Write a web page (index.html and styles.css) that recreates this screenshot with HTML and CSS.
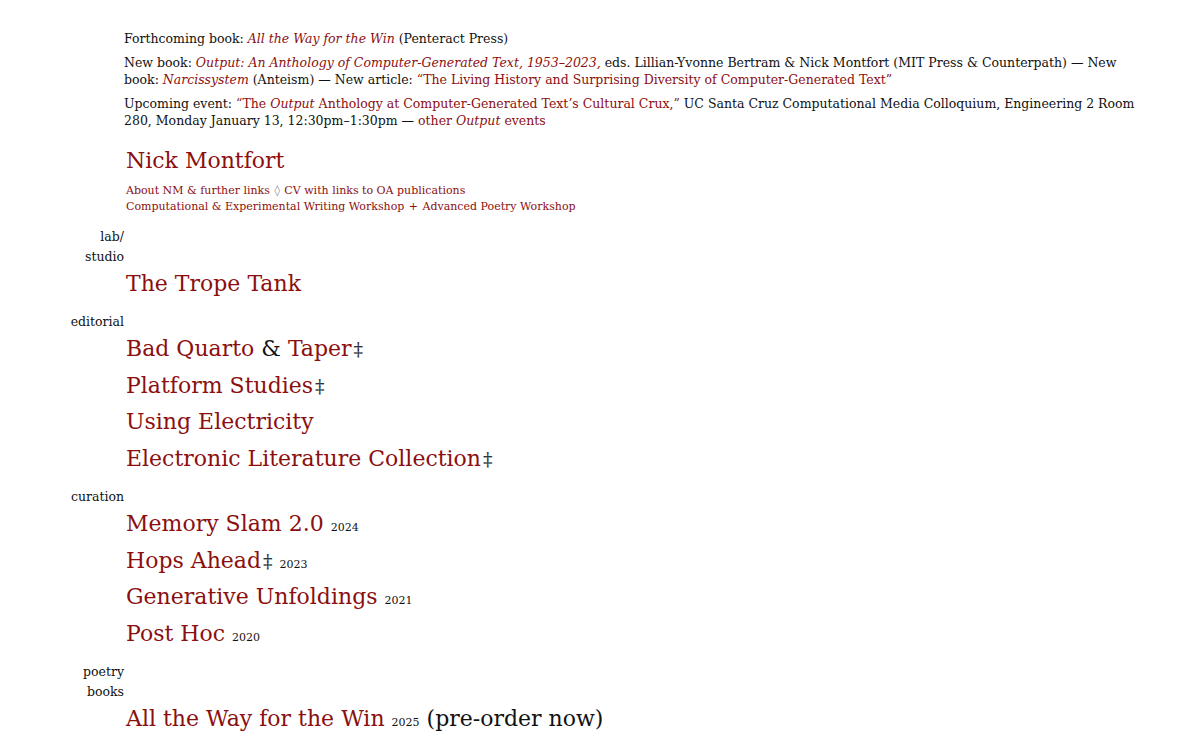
FILE: index.html
```html
<!DOCTYPE html>
<html lang="en">
<head>
    <meta charset="UTF-8">
    <meta name="viewport" content="width=device-width, initial-scale=1.0">
    <title>Nick Montfort</title>
    <link rel="stylesheet" href="styles.css">
</head>
<body>
    <div class="news">
        <p>Forthcoming book: <a href="#"><i>All the Way for the Win</i></a> (Penteract Press)</p>
        <p>New book: <a href="#"><i>Output: An Anthology of Computer-Generated Text, 1953&ndash;2023,</i></a> eds. Lillian-Yvonne Bertram &amp; Nick Montfort (MIT Press &amp; Counterpath) &mdash; New book: <a href="#"><i>Narcissystem</i></a> (Anteism) &mdash; New article: <a href="#">&ldquo;The Living History and Surprising Diversity of Computer-Generated Text&rdquo;</a></p>
        <p>Upcoming event: <a href="#">&ldquo;The <i>Output</i> Anthology at Computer-Generated Text&rsquo;s Cultural Crux,&rdquo;</a> UC Santa Cruz Computational Media Colloquium, Engineering 2 Room 280, Monday January 13, 12:30pm&ndash;1:30pm &mdash; <a href="#">other <i>Output</i> events</a></p>
    </div>

    <div class="intro">
        <h1><a href="#">Nick Montfort</a></h1>
        <div class="links">
            <a href="#">About NM &amp; further links</a> <span class="sep">&#9674;</span> <a href="#">CV with links to OA publications</a><br>
            <a href="#">Computational &amp; Experimental Writing Workshop</a> <span class="plus">+</span> <a href="#">Advanced Poetry Workshop</a>
        </div>
    </div>

    <section class="group">
        <div class="label">lab/<br>studio</div>
        <div class="entry"><a href="#">The Trope Tank</a></div>
    </section>

    <section class="group">
        <div class="label">editorial</div>
        <div class="entry"><a href="#">Bad Quarto</a> &amp; <a href="#">Taper</a><span class="dag">&Dagger;</span></div>
        <div class="entry"><a href="#">Platform Studies</a><span class="dag">&Dagger;</span></div>
        <div class="entry"><a href="#">Using Electricity</a></div>
        <div class="entry"><a href="#">Electronic Literature Collection</a><span class="dag">&Dagger;</span></div>
    </section>

    <section class="group">
        <div class="label">curation</div>
        <div class="entry"><a href="#">Memory Slam 2.0</a> <span class="year">2024</span></div>
        <div class="entry"><a href="#">Hops Ahead</a><span class="dag">&Dagger;</span> <span class="year">2023</span></div>
        <div class="entry"><a href="#">Generative Unfoldings</a> <span class="year">2021</span></div>
        <div class="entry"><a href="#">Post Hoc</a> <span class="year">2020</span></div>
    </section>

    <section class="group">
        <div class="label">poetry<br>books</div>
        <div class="entry"><a href="#">All the Way for the Win</a> <span class="year">2025</span> (pre-order now)</div>
    </section>
</body>
</html>
```

FILE: styles.css
```css
body {
    font-family: "DejaVu Serif", "Liberation Serif", serif;
    color: #111;
    margin: 0;
    padding: 30px 0 10px 0;
    background-color: #fff;
}
a {
    color: #8b0f0f;
    text-decoration: none;
}
.news {
    margin-left: 124px;
    max-width: 1012px;
    font-size: 12.5px;
    line-height: 17px;
}
.news p {
    margin: 0 0 7px 0;
}
.intro {
    margin-left: 126px;
    margin-top: 17px;
}
.intro h1 {
    font-size: 22px;
    font-weight: normal;
    line-height: 30px;
    margin: 0 0 7px 0;
}
.links {
    font-size: 11px;
    line-height: 16px;
    color: #8b0f0f;
}
.links .sep {
    color: #888;
    margin: 0 1px;
}
.links .plus {
    margin: 0 1px;
}
.group {
    margin-top: 12px;
}
.label {
    width: 124px;
    text-align: right;
    font-size: 12.5px;
    line-height: 20px;
}
.entry {
    margin-left: 126px;
    font-size: 22px;
    line-height: 33px;
    margin-bottom: 3.7px;
}
.dag {
    color: #333;
    font-size: 19px;
    line-height: 1;
    margin-left: 2px;
}
.year {
    font-size: 11px;
    line-height: 1;
}
```
